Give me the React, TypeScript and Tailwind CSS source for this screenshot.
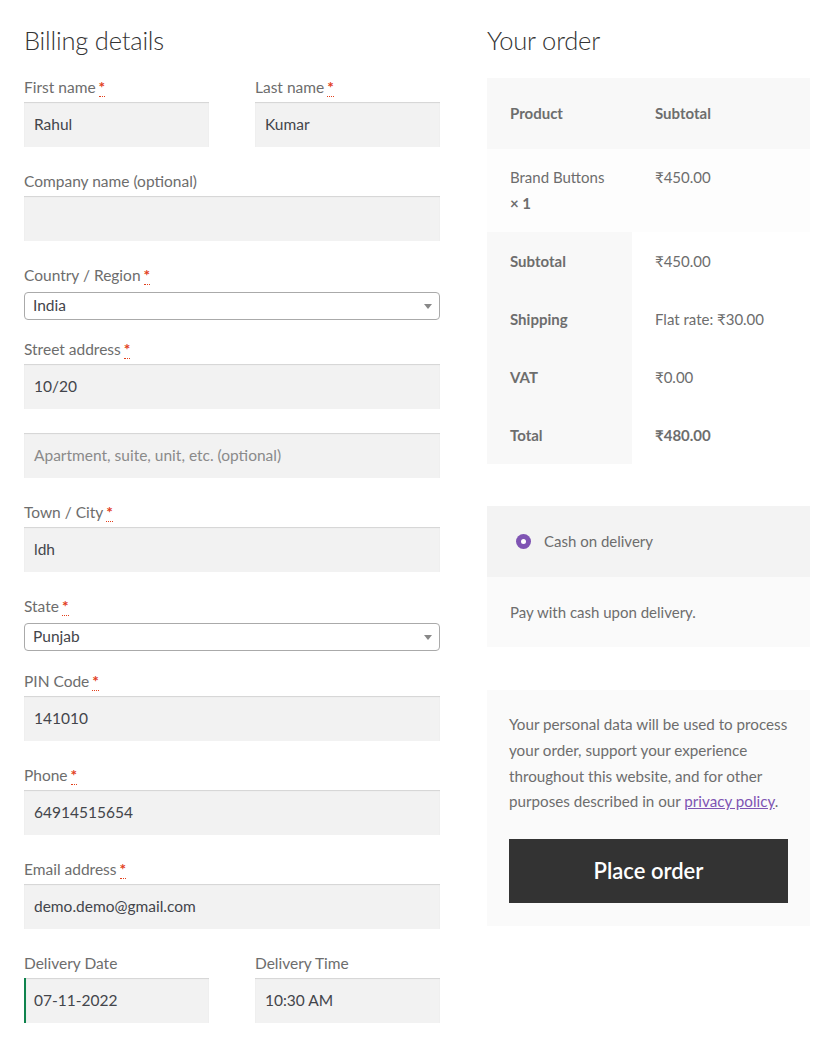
import React from "react";

const FONT = { fontFamily: "Lato, 'Noto Sans', sans-serif" };

function Req() {
  return (
    <abbr className="ml-[3px] text-[#e2401c] no-underline border-b border-dotted border-[#e2401c] font-bold" title="required">
      *
    </abbr>
  );
}

function Label({ text, req = false }: { text: string; req?: boolean }) {
  return (
    <div className="h-[25px] leading-[20px] text-[15.5px] text-[#6d6d6d]">
      {text}
      {req && <Req />}
    </div>
  );
}

function TextBox({ value, placeholder, accent = false }: { value?: string; placeholder?: string; accent?: boolean }) {
  return (
    <div
      className={`h-[45px] bg-[#f2f2f2] shadow-[inset_0_1px_1px_rgba(0,0,0,0.125)] flex items-center text-[15.5px] ${
        accent ? "border-l-2 border-[#0f834d] pl-[8px]" : "pl-[10px]"
      } ${value ? "text-[#43454b]" : "text-[#8a8a8a]"}`}
    >
      {value || placeholder}
    </div>
  );
}

function SelectBox({ value }: { value: string }) {
  return (
    <div className="h-[28px] border border-[#aaa] rounded-[4px] bg-white flex items-center justify-between pl-[8px] pr-[7px] text-[15.5px] text-[#43454b]">
      <span>{value}</span>
      <span className="w-0 h-0 border-l-[4px] border-r-[4px] border-t-[5px] border-l-transparent border-r-transparent border-t-[#888]" />
    </div>
  );
}

function Field({ label, req, children, className = "" }: { label: string; req?: boolean; children: React.ReactNode; className?: string }) {
  return (
    <div className={className}>
      <Label text={label} req={req} />
      {children}
    </div>
  );
}

const TOTALS = [
  { label: "Subtotal", value: "₹450.00", bold: false },
  { label: "Shipping", value: "Flat rate: ₹30.00", bold: false },
  { label: "VAT", value: "₹0.00", bold: false },
  { label: "Total", value: "₹480.00", bold: true },
];

export default function App() {
  return (
    <div className="min-h-[1059px] bg-white pl-[24px] pt-[22px] flex gap-[47px]" style={FONT}>
      {/* Billing column */}
      <div className="w-[416px] shrink-0">
        <h3 className="h-[36px] leading-[36px] text-[25.5px] font-light text-[#333] tracking-[-0.2px]">Billing details</h3>

        <div className="mt-[19px] flex gap-[46px]">
          <Field label="First name" req className="flex-1">
            <TextBox value="Rahul" />
          </Field>
          <Field label="Last name" req className="flex-1">
            <TextBox value="Kumar" />
          </Field>
        </div>

        <Field label="Company name (optional)" className="mt-[24px]">
          <TextBox />
        </Field>

        <div className="mt-[24px]">
          <Label text="Country / Region" req />
          <div className="pt-[2px]">
            <SelectBox value="India" />
          </div>
        </div>

        <Field label="Street address" req className="mt-[19px]">
          <TextBox value="10/20" />
        </Field>
        <div className="mt-[24px]">
          <TextBox placeholder="Apartment, suite, unit, etc. (optional)" />
        </div>

        <Field label="Town / City" req className="mt-[24px]">
          <TextBox value="ldh" />
        </Field>

        <div className="mt-[24px]">
          <Label text="State" req />
          <div className="pt-[2px]">
            <SelectBox value="Punjab" />
          </div>
        </div>

        <Field label="PIN Code" req className="mt-[20px]">
          <TextBox value="141010" />
        </Field>
        <Field label="Phone" req className="mt-[24px]">
          <TextBox value="64914515654" />
        </Field>
        <Field label="Email address" req className="mt-[24px]">
          <TextBox value="demo.demo@gmail.com" />
        </Field>

        <div className="mt-[24px] flex gap-[46px]">
          <Field label="Delivery Date" className="flex-1">
            <TextBox value="07-11-2022" accent />
          </Field>
          <Field label="Delivery Time" className="flex-1">
            <TextBox value="10:30 AM" />
          </Field>
        </div>
      </div>

      {/* Order column */}
      <div className="w-[323px] shrink-0">
        <h3 className="h-[36px] leading-[36px] text-[25.5px] font-light text-[#333] tracking-[-0.2px]">Your order</h3>

        <div className="mt-[20px] text-[15px] text-[#6d6d6d]">
          <div className="h-[71px] bg-[#f8f8f8] flex items-center font-bold">
            <div className="w-[145px] pl-[23px]">Product</div>
            <div className="pl-[23px]">Subtotal</div>
          </div>
          <div className="h-[83px] bg-[#fdfdfd] flex pt-[15px] leading-[26px]">
            <div className="w-[145px] pl-[23px]">
              Brand Buttons
              <div className="font-bold">× 1</div>
            </div>
            <div className="pl-[23px]">₹450.00</div>
          </div>
          {TOTALS.map((t) => (
            <div key={t.label} className="h-[58px] flex">
              <div className="w-[145px] pl-[23px] bg-[#f8f8f8] flex items-center font-bold">{t.label}</div>
              <div className={`pl-[23px] flex items-center ${t.bold ? "font-bold" : ""}`}>{t.value}</div>
            </div>
          ))}
        </div>

        <div className="mt-[42px] text-[15px] text-[#6d6d6d]">
          <div className="h-[71px] bg-[#f3f3f3] flex items-center pl-[29px]">
            <span className="w-[15px] h-[15px] rounded-full bg-[#7f54b3] flex items-center justify-center">
              <span className="w-[5px] h-[5px] rounded-full bg-white" />
            </span>
            <span className="ml-[13px]">Cash on delivery</span>
          </div>
          <div className="h-[70px] bg-[#fafafa] flex items-center pl-[23px]">Pay with cash upon delivery.</div>
        </div>

        <div className="mt-[43px] bg-[#fafafa] px-[22px] pt-[22px] pb-[23px] text-[15.2px] text-[#6d6d6d] leading-[25.8px]">
          <p>
            Your personal data will be used to process your order, support your experience throughout this website, and for other purposes described in our{" "}
            <a className="text-[#7f54b3] underline">privacy policy</a>.
          </p>
          <button className="mt-[24px] w-full h-[64px] bg-[#333] text-white text-[22px] font-semibold">Place order</button>
        </div>
      </div>
    </div>
  );
}
